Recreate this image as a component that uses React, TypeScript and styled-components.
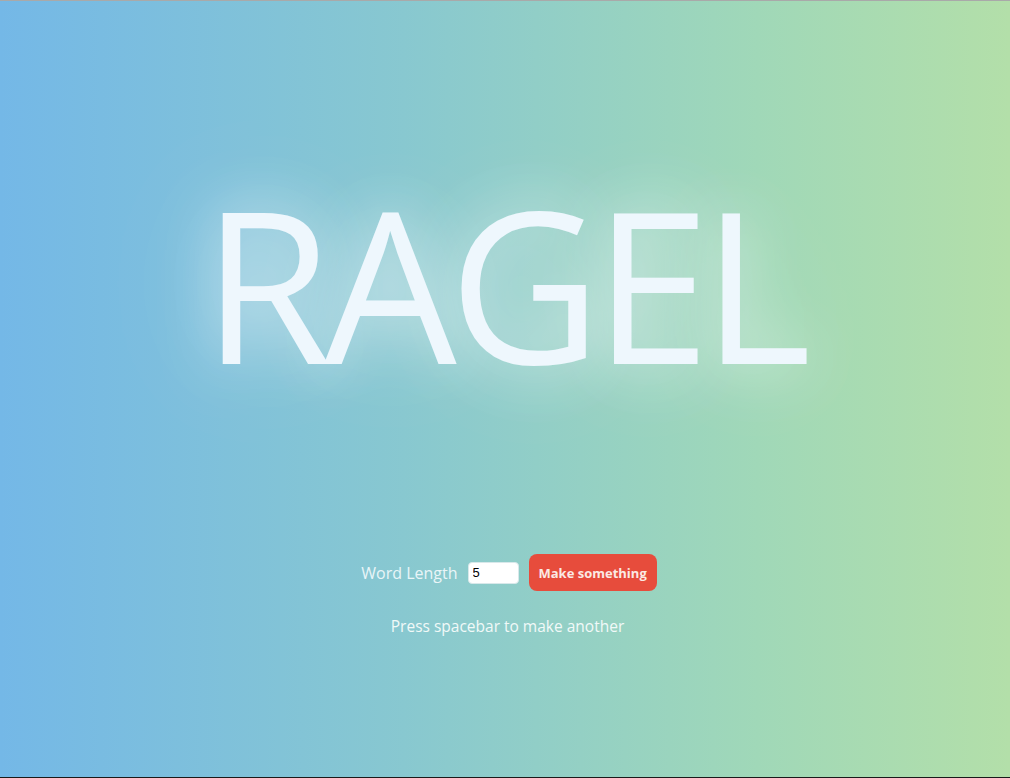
import React from "react";
import styled, { createGlobalStyle } from "styled-components";

const Global = createGlobalStyle`
  html, body { margin: 0; padding: 0; }
  body { font-family: "Open Sans", "Noto Sans", sans-serif; }
  * { box-sizing: border-box; }
`;

const Page = styled.div`
  width: 1010px;
  height: 778px;
  border-top: 1px solid #a9a9a9;
  border-bottom: 1px solid #1a1a1a;
  background: linear-gradient(to right, #74b8e7 0%, #88c8d0 40%, #a0d8b8 75%, #b3dfa9 100%);
  display: flex;
  flex-direction: column;
  align-items: center;
  overflow: hidden;
`;

const Word = styled.h1`
  margin: 137px 0 0 0;
  font-family: "Open Sans", sans-serif;
  font-weight: 400;
  font-size: 210px;
  line-height: 290px;
  letter-spacing: -8px;
  color: #eef7fd;
  text-shadow: 0 0 60px rgba(255, 255, 255, 0.7), 0 0 120px rgba(255, 255, 255, 0.35);
  padding-right: 4px;
`;

const Controls = styled.div`
  margin-top: 126px;
  display: flex;
  align-items: center;
  gap: 10px;
  padding-left: 8px;
`;

const Label = styled.label`
  font-size: 16px;
  color: #e9f5f8;
`;

const NumberInput = styled.input`
  width: 51px;
  height: 22px;
  border: 1px solid #d8e8ea;
  border-radius: 4px;
  background: #fff;
  font-family: "Liberation Sans", sans-serif;
  font-size: 13px;
  padding: 0 4px;
  color: #000;
  outline: none;
`;

const Button = styled.button`
  height: 37px;
  padding: 0 10px;
  border: none;
  border-radius: 8px;
  background: #e74c3c;
  color: #fbe9e4;
  font-family: "Open Sans", sans-serif;
  font-weight: 700;
  font-size: 13px;
  cursor: pointer;
`;

const Hint = styled.p`
  margin: 24px 0 0 0;
  font-size: 15.5px;
  color: #f1f9f8;
  padding-left: 5px;
`;

export default function App() {
  return (
    <>
      <Global />
      <Page>
        <Word>RAGEL</Word>
        <Controls>
          <Label>Word Length</Label>
          <NumberInput type="text" defaultValue="5" />
          <Button>Make something</Button>
        </Controls>
        <Hint>Press spacebar to make another</Hint>
      </Page>
    </>
  );
}
